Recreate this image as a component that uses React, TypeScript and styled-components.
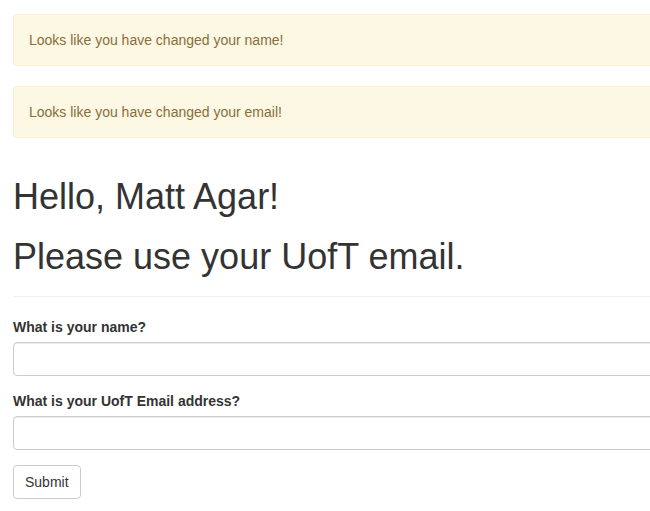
import React from "react";
import styled, { createGlobalStyle } from "styled-components";

const Global = createGlobalStyle`
  html, body { margin: 0; padding: 0; overflow: hidden; background: #fff; }
  body {
    font-family: "Liberation Sans", Arial, sans-serif;
    font-size: 14px;
    line-height: 1.42857143;
    color: #333;
  }
  * { box-sizing: border-box; }
`;

const Page = styled.div`
  width: 760px;
  padding: 14px 0 0 13px;
`;

const Alerts = styled.div`
  padding-bottom: 19px;
`;

const Alert = styled.div`
  padding: 15px;
  margin-bottom: 20px;
  border: 1px solid #faebcc;
  border-radius: 4px;
  background: #fcf8e3;
  color: #8a6d3b;
  &:last-child { margin-bottom: 0; }
`;

const Heading = styled.h1`
  font-family: inherit;
  font-size: 36px;
  font-weight: 500;
  line-height: 1.1;
  margin: 20px 0 10px;
  color: #333;
`;

const Rule = styled.hr`
  margin: 20px 0;
  border: 0;
  border-top: 1px solid #eee;
  height: 0;
`;

const Group = styled.div`
  margin-bottom: 15px;
`;

const Label = styled.label`
  display: inline-block;
  max-width: 100%;
  margin-bottom: 5px;
  font-weight: 700;
`;

const Input = styled.input`
  display: block;
  width: 100%;
  height: 34px;
  padding: 6px 12px;
  font-size: 14px;
  font-family: inherit;
  line-height: 1.42857143;
  color: #555;
  background: #fff;
  border: 1px solid #ccc;
  border-radius: 4px;
  box-shadow: inset 0 1px 1px rgba(0, 0, 0, 0.075);
  outline: none;
`;

const Button = styled.button`
  display: inline-block;
  padding: 6px 11px;
  font-size: 14px;
  font-family: inherit;
  line-height: 1.42857143;
  color: #333;
  background: #fff;
  border: 1px solid #ccc;
  border-radius: 4px;
  cursor: pointer;
`;

export default function App() {
  return (
    <>
      <Global />
      <Page>
        <Alerts>
          <Alert>Looks like you have changed your name!</Alert>
          <Alert>Looks like you have changed your email!</Alert>
        </Alerts>
        <Heading>Hello, Matt Agar!</Heading>
        <Heading>Please use your UofT email.</Heading>
        <Rule />
        <form onSubmit={(e) => e.preventDefault()}>
          <Group>
            <Label htmlFor="name">What is your name?</Label>
            <Input id="name" type="text" />
          </Group>
          <Group>
            <Label htmlFor="email">What is your UofT Email address?</Label>
            <Input id="email" type="text" />
          </Group>
          <Button type="submit">Submit</Button>
        </form>
      </Page>
    </>
  );
}
